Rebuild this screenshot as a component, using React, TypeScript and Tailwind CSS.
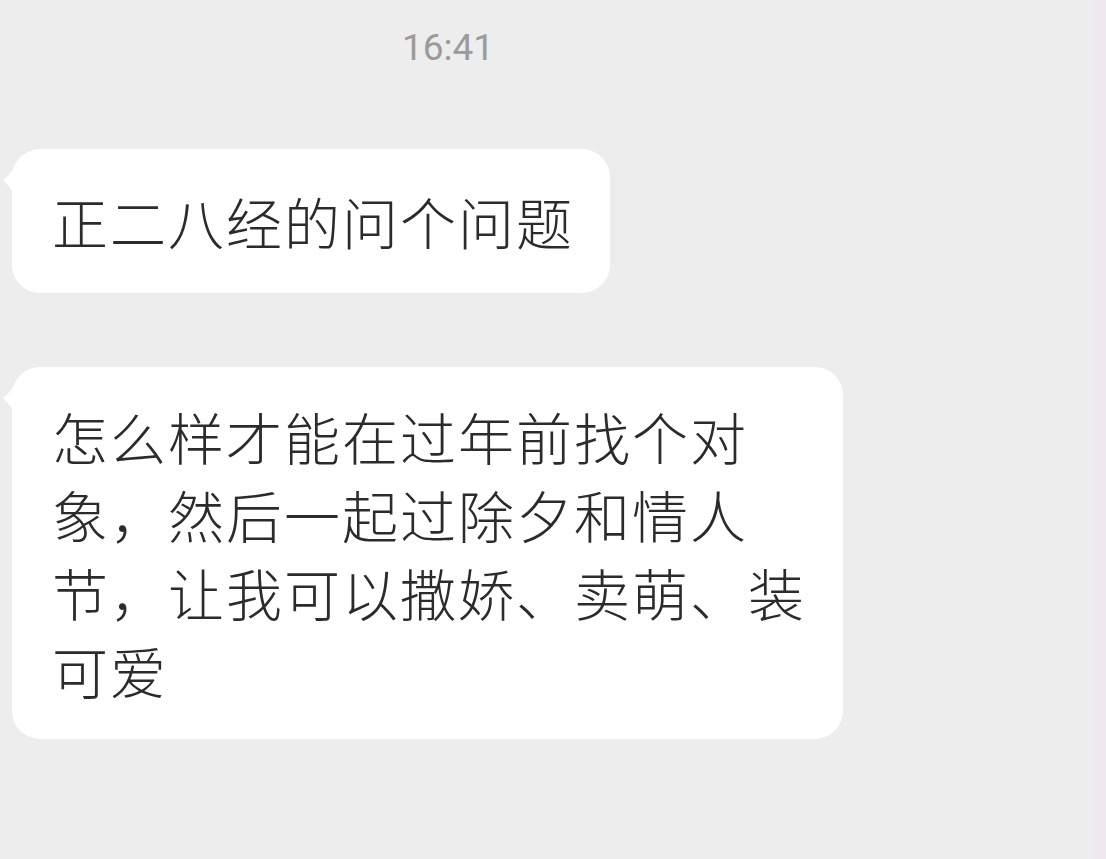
import React from "react";

const FONT = '"Noto Sans CJK SC", "Noto Sans", sans-serif';

function Tail() {
  // small hook on the bubble's left edge
  return (
    <svg
      className="absolute -left-[11px] top-[14px]"
      width="16"
      height="34"
      viewBox="0 0 16 34"
    >
      <path d="M16 0 C12 8 7 13 2 17 C7 22 11 27 16 34 Z" fill="#ffffff" />
    </svg>
  );
}

function Bubble({ children, className }: { children: React.ReactNode; className: string }) {
  return (
    <div className={`relative rounded-[28px] bg-white pl-[40px] pr-[36px] text-[56px] font-light leading-[78px] tracking-[2px] text-[#2b2b2b] ${className}`}>
      <Tail />
      {children}
    </div>
  );
}

export default function App() {
  return (
    <div
      className="flex h-[859px] w-full overflow-hidden bg-[#ededed]"
      style={{ fontFamily: FONT }}
    >
      <div className="flex flex-1 flex-col">
        {/* timestamp */}
        <div className="pt-[22px] pl-[402px]">
          <span
            className="text-[37px] leading-[52px] text-[#9b9b9b]"
            style={{ fontFamily: 'Roboto, "Noto Sans", sans-serif' }}
          >
            16:41
          </span>
        </div>

        <div className="flex flex-col items-start gap-[74px] pl-[12px] pt-[75px]">
          <Bubble className="py-[33px]">正二八经的问个问题</Bubble>
          <Bubble className="w-[831px] py-[30px]">
            怎么样才能在过年前找个对象，然后一起过除夕和情人节，让我可以撒娇、卖萌、装可爱
          </Bubble>
        </div>
      </div>
      {/* faint edge strip on the right */}
      <div className="w-[14px] bg-[#eeeaee]" />
    </div>
  );
}
